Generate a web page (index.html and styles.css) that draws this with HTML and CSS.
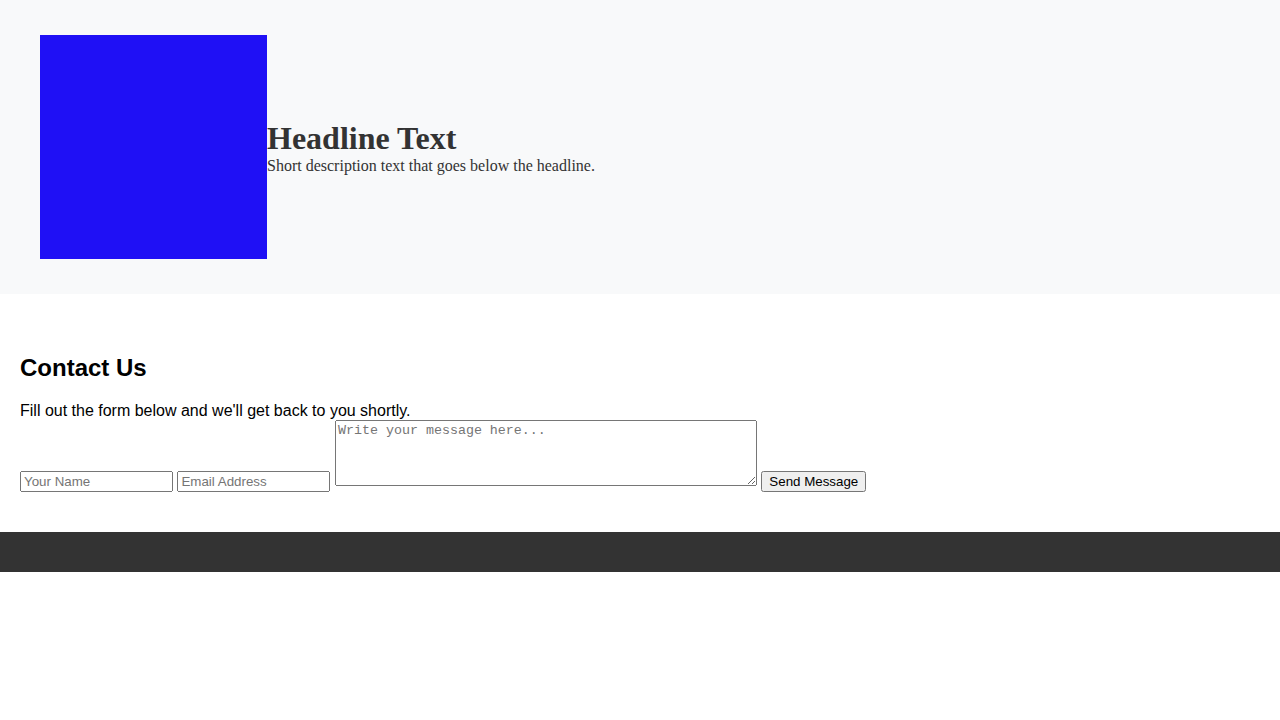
FILE: index.html
```html
<!DOCTYPE html>
<html lang="en">
<head>
<meta charset="utf-8">
<title>Headline</title>
<link rel="stylesheet" href="styles.css">
</head>
<body>
<section class="hero">
  <div class="hero-image"></div>
  <div class="hero-text">
    <h1 class="hero-title">Headline Text</h1>
    <p class="hero-desc">Short description text that goes below the headline.</p>
  </div>
</section>
<section class="contact">
  <h2 class="contact-title">Contact Us</h2>
  <p class="contact-intro">Fill out the form below and we'll get back to you shortly.</p>
  <form class="contact-form">
    <input class="field" type="text" placeholder="Your Name">
    <input class="field" type="email" placeholder="Email Address">
    <textarea class="message" rows="4" cols="50" placeholder="Write your message here..."></textarea>
    <button class="send" type="button">Send Message</button>
  </form>
</section>
<footer class="footer"></footer>
</body>
</html>
```
FILE: styles.css
```css
body {
  margin: 0;
  font-family: "Liberation Serif", serif;
}
.hero {
  display: flex;
  align-items: center;
  background: #f8f9fa;
  padding: 35px 40px;
  color: #333;
}
.hero-image {
  width: 227px;
  height: 224px;
  background: #1f10f5;
  flex-shrink: 0;
}
.hero-title {
  margin: 0;
  font-size: 32px;
  font-weight: bold;
}
.hero-desc {
  margin: 0;
  font-size: 16px;
}
.contact {
  padding: 40px 20px;
  font-family: "Liberation Sans", Arial, sans-serif;
  color: #000;
}
.contact-title {
  margin: 20px 0;
  font-size: 24px;
}
.contact-intro {
  margin: 0;
  font-size: 16px;
}
.contact-form {
  margin: 0;
}
.field, .send {
  font-family: "Liberation Sans", Arial, sans-serif;
  font-size: 13.333px;
}
.field {
  box-sizing: border-box;
  width: 153px;
}
.message {
  box-sizing: border-box;
  width: 422px;
  height: 66px;
  font-family: "Liberation Mono", monospace;
  font-size: 13.333px;
}
.footer {
  height: 40px;
  background: #333;
}
```
